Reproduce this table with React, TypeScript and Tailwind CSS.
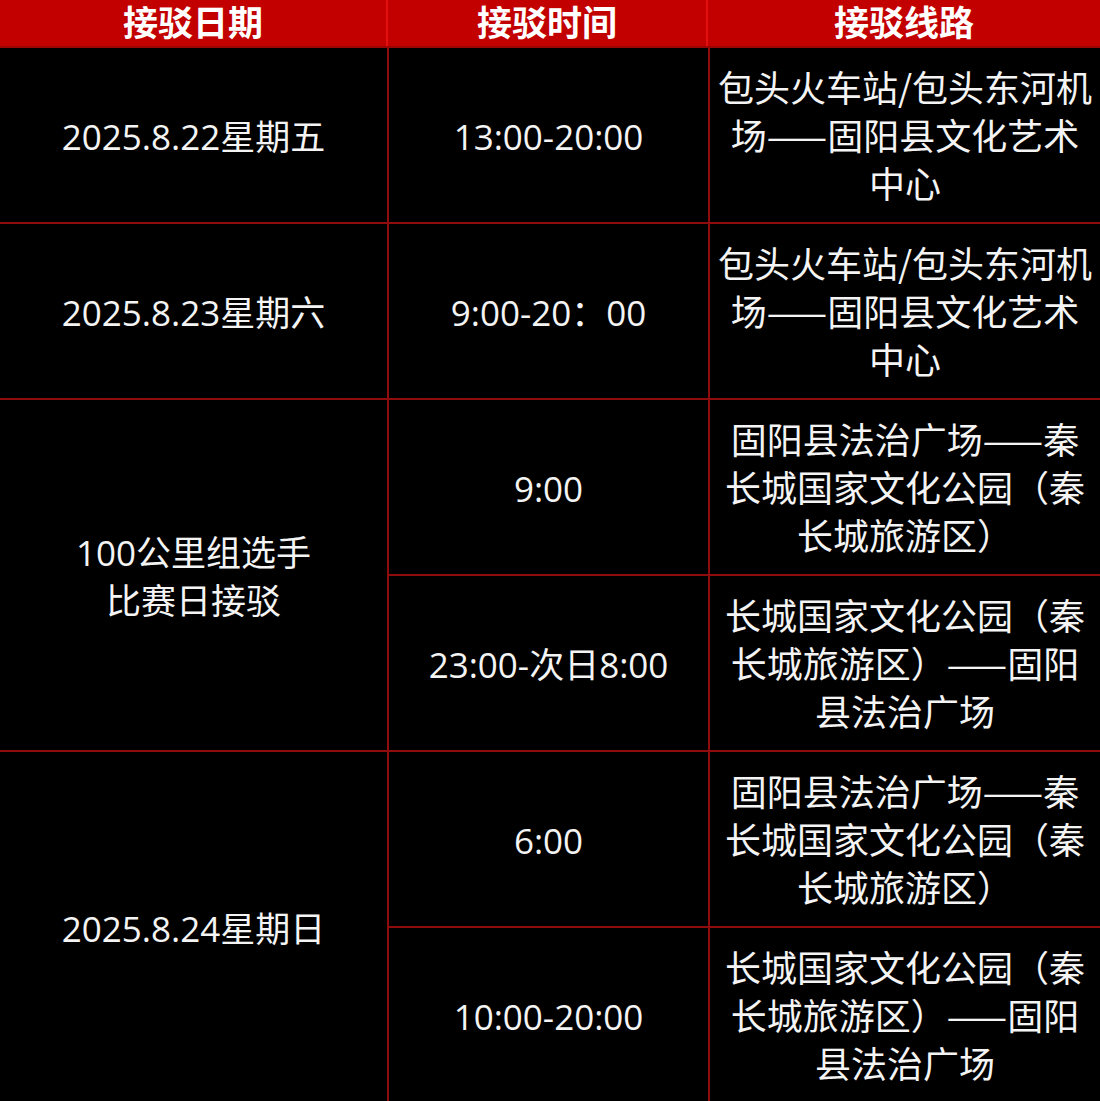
const font = { fontFamily: '"Open Sans", "Noto Sans CJK SC", sans-serif' };
const cjk = { fontFamily: '"Noto Sans CJK SC", sans-serif' };

type Row = {
  date?: string[];
  dateSpan?: number;
  time: string;
  route: string[];
};

const rows: Row[] = [
  { date: ['2025.8.22星期五'], time: '13:00-20:00', route: ['包头火车站/包头东河机', '场——固阳县文化艺术', '中心'] },
  { date: ['2025.8.23星期六'], time: '9:00-20：00', route: ['包头火车站/包头东河机', '场——固阳县文化艺术', '中心'] },
  { date: ['100公里组选手', '比赛日接驳'], dateSpan: 2, time: '9:00', route: ['固阳县法治广场——秦', '长城国家文化公园（秦', '长城旅游区）'] },
  { time: '23:00-次日8:00', route: ['长城国家文化公园（秦', '长城旅游区）——固阳', '县法治广场'] },
  { date: ['2025.8.24星期日'], dateSpan: 2, time: '6:00', route: ['固阳县法治广场——秦', '长城国家文化公园（秦', '长城旅游区）'] },
  { time: '10:00-20:00', route: ['长城国家文化公园（秦', '长城旅游区）——固阳', '县法治广场'] },
];

function Lines({ lines }: { lines: string[] }) {
  return (
    <div className="text-center">
      {lines.map((l, i) => (
        <div key={i}>{l}</div>
      ))}
    </div>
  );
}

export default function App() {
  return (
    <div className="w-[1100px] h-[1101px] overflow-hidden bg-black text-[#f4f4f4]" style={font}>
      <div className="flex h-[48px] bg-[#c20000] text-white font-bold text-[35px] border-b-2 border-[#9a0606]">
        <div className="w-[388px] flex items-center justify-center border-r-2 border-[#e41010]">接驳日期</div>
        <div className="w-[320px] flex items-center justify-center border-r-2 border-[#e41010]">接驳时间</div>
        <div className="flex-1 flex items-center justify-center">接驳线路</div>
      </div>
      <div className="grid grid-cols-[387px_319px_1fr] auto-rows-[174px] gap-[2px] bg-[#8e0c0c] text-[35px] leading-[48px]">
        {rows.map((r, i) => (
          <div key={i} className="contents">
            {r.date && (
              <div
                className={`bg-black flex items-center justify-center pt-[3px] ${r.dateSpan === 2 ? 'row-span-2' : ''}`}
              >
                <Lines lines={r.date} />
              </div>
            )}
            <div className="bg-black flex items-center justify-center pt-[3px]">{r.time}</div>
            <div className="bg-black flex items-center justify-center pb-[3px] text-[36px]" style={cjk}>
              <Lines lines={r.route} />
            </div>
          </div>
        ))}
      </div>
    </div>
  );
}
